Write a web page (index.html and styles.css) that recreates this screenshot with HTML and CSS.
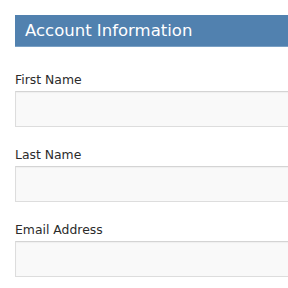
FILE: index.html
```html
<!DOCTYPE html>
<html lang="en">
<head>
	<meta charset="UTF-8">
	<title>Account Information</title>
	<link rel="stylesheet" href="styles.css">
</head>
<body>

<div class="panel">
	<h2 class="panel-title">Account Information</h2>
	<form class="account-form">
		<div class="field">
			<label for="first_name">First Name</label>
			<input type="text" name="first_name" id="first_name" />
		</div>
		<div class="field">
			<label for="last_name">Last Name</label>
			<input type="text" name="last_name" id="last_name" />
		</div>
		<div class="field">
			<label for="email">Email Address</label>
			<input type="email" name="email" id="email" />
		</div>
	</form>
</div>

</body>
</html>
```

FILE: styles.css
```css
html,
body {
    margin: 0;
    background: #ffffff;
    overflow: hidden;
}
body {
    padding: 15px 0 15px 15px;
    font-family: "DejaVu Sans", Verdana, sans-serif;
}
.panel {
    width: 340px;
}
.panel-title {
    margin: 0;
    height: 32px;
    padding-left: 10px;
    background: #5181af;
    border-bottom: 1px solid #7aa0c4;
    box-sizing: border-box;
    color: #ffffff;
    font-size: 16.5px;
    font-weight: normal;
    line-height: 31px;
}
.account-form {
    display: flex;
    flex-direction: column;
    gap: 20px;
    padding-top: 25px;
}
.field {
    display: flex;
    flex-direction: column;
    gap: 3px;
}
.field label {
    color: #2b2b2b;
    font-size: 12.4px;
    line-height: 16px;
}
.field input {
    height: 36px;
    margin: 0;
    box-sizing: border-box;
    background: #f9f9f9;
    border: 1px solid #dddddd;
    border-top-color: #d4d4d4;
    box-shadow: inset 0 1px 1px rgba(0, 0, 0, 0.04);
}
```
